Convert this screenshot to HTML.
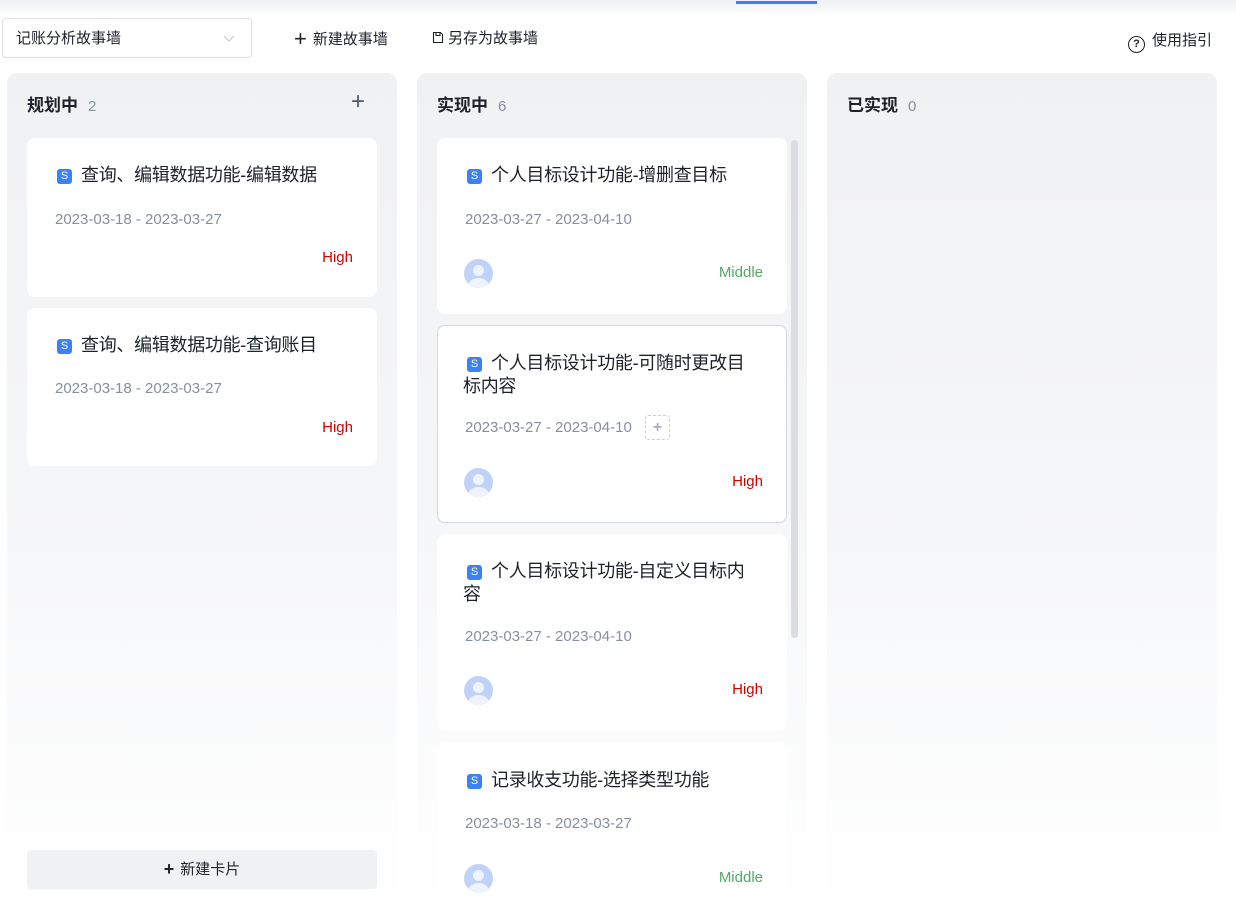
<!DOCTYPE html>
<html><head><meta charset="utf-8"><style>
*{margin:0;padding:0;box-sizing:border-box}
body{width:1236px;height:909px;overflow:hidden;background:#fff;font-family:"Liberation Sans","Noto Sans CJK SC",sans-serif;color:#1d2129;position:relative}
.a{position:absolute}
.top{left:0;top:0;width:1236px;height:16px;background:linear-gradient(#eef0f3,#fff)}
.col{top:73px;width:390px;height:836px;border-radius:10px;background:linear-gradient(#f0f1f3 0%,#f5f6f8 50%,#fff 100%)}
.ch{font-size:17px;font-weight:bold;color:#1d2129}
.cnt{font-size:15px;color:#86909c;font-weight:normal;margin-left:10px}
.card{background:#fff;border-radius:8px;width:350px}
.t{position:absolute;left:26px;right:30px;top:26px;font-size:18px;line-height:23px;color:#1d2129;letter-spacing:-0.3px}
.s{display:inline-block;width:15px;height:15px;background:#3b82f6;border-radius:3px;color:#fff;font-size:11px;text-align:center;line-height:15px;vertical-align:2px;margin:0 9px 0 4px;letter-spacing:0}
.d{position:absolute;left:28px;font-size:15px;color:#86909c}
.p{position:absolute;right:24px;font-size:15px}
.hi{color:#d40000}.mi{color:#52a86a}
.av{position:absolute;left:27px;width:29px;height:29px;border-radius:50%;background:#bed3f7;overflow:hidden}
.av:before{content:"";position:absolute;left:9px;top:6px;width:11px;height:11px;border-radius:50%;background:#eef3fd}
.av:after{content:"";position:absolute;left:4px;top:19px;width:21px;height:16px;border-radius:50%;background:#eef3fd}
</style></head><body>
<div class="a top"></div>
<div class="a" style="left:736px;top:1px;width:81px;height:3px;background:#3b82f6"></div>
<div class="a" style="left:2px;top:18px;width:250px;height:40px;border:1px solid #dcdfe6;border-radius:4px;font-size:15px;line-height:40px;padding-left:13px">记账分析故事墙
<svg class="a" style="left:220px;top:16px" width="12" height="8" viewBox="0 0 12 8"><path d="M1 1l5 5 5-5" fill="none" stroke="#c0c4cc" stroke-width="1"/></svg></div>
<div class="a" style="left:294px;top:26px;font-size:15px"><span style="font-size:22px;vertical-align:-2px;font-weight:300;margin-right:6px">+</span>新建故事墙</div>
<div class="a" style="left:432px;top:27px;font-size:15px"><svg width="12" height="13" viewBox="0 0 12 13" style="vertical-align:-1px;margin-right:4px"><path d="M1.5 1.5h7l2 2v8h-9z M4 1.5v3h4v-3" fill="none" stroke="#1d2129" stroke-width="1.1"/></svg>另存为故事墙</div>
<div class="a" style="left:1128px;top:29px;font-size:15px"><span style="display:inline-block;width:17px;height:17px;border:1.3px solid #1d2129;border-radius:50%;font-size:11px;text-align:center;line-height:15px;font-weight:bold;vertical-align:-2px;margin-right:7px">?</span>使用指引</div>

<div class="a col" style="left:7px"></div>
<div class="a col" style="left:417px"></div>
<div class="a col" style="left:827px"></div>
<div class="a ch" style="left:27px;top:91px">规划中<span class="cnt">2</span></div>
<div class="a" style="left:351px;top:88px;font-size:24px;color:#4e5969">+</div>
<div class="a ch" style="left:437px;top:91px">实现中<span class="cnt">6</span></div>
<div class="a ch" style="left:847px;top:91px">已实现<span class="cnt">0</span></div>

<div class="a card" style="left:27px;top:138px;height:159px">
<div class="t"><span class="s">S</span>查询、编辑数据功能-编辑数据</div>
<div class="d" style="top:73px">2023-03-18 - 2023-03-27</div>
<div class="p hi" style="top:111px">High</div></div>
<div class="a card" style="left:27px;top:308px;height:158px">
<div class="t"><span class="s">S</span>查询、编辑数据功能-查询账目</div>
<div class="d" style="top:72px">2023-03-18 - 2023-03-27</div>
<div class="p hi" style="top:111px">High</div></div>
<div class="a" style="left:27px;top:850px;width:350px;height:39px;background:#f0f1f3;border-radius:4px;text-align:center;line-height:39px;font-size:15px"><b style="font-size:18px;vertical-align:-1px;margin-right:6px">+</b>新建卡片</div>

<div class="a card" style="left:437px;top:138px;height:176px">
<div class="t"><span class="s">S</span>个人目标设计功能-增删查目标</div>
<div class="d" style="top:73px">2023-03-27 - 2023-04-10</div>
<div class="av" style="top:121px"></div>
<div class="p mi" style="top:126px">Middle</div></div>
<div class="a card" style="left:437px;top:325px;height:198px;border:1px solid #d5d8de">
<div class="t" style="left:25px;top:26px"><span class="s">S</span>个人目标设计功能-可随时更改目标内容</div>
<div class="d" style="left:27px;top:93px">2023-03-27 - 2023-04-10</div>
<div class="a" style="left:207px;top:89px;width:25px;height:25px;border:1px dashed #c9cdd4;border-radius:3px;text-align:center;line-height:23px;color:#a9aeb8;font-weight:bold;font-size:16px">+</div>
<div class="av" style="left:26px;top:142px"></div>
<div class="p hi" style="right:23px;top:147px">High</div></div>
<div class="a card" style="left:437px;top:534px;height:197px">
<div class="t"><span class="s">S</span>个人目标设计功能-自定义目标内容</div>
<div class="d" style="top:94px">2023-03-27 - 2023-04-10</div>
<div class="av" style="top:142px"></div>
<div class="p hi" style="top:147px">High</div></div>
<div class="a card" style="left:437px;top:743px;height:166px">
<div class="t"><span class="s">S</span>记录收支功能-选择类型功能</div>
<div class="d" style="top:72px">2023-03-18 - 2023-03-27</div>
<div class="av" style="top:121px"></div>
<div class="p mi" style="top:126px">Middle</div></div>
<div class="a" style="left:791px;top:140px;width:7px;height:498px;background:#dcdde0;border-radius:4px"></div>
</body></html>
